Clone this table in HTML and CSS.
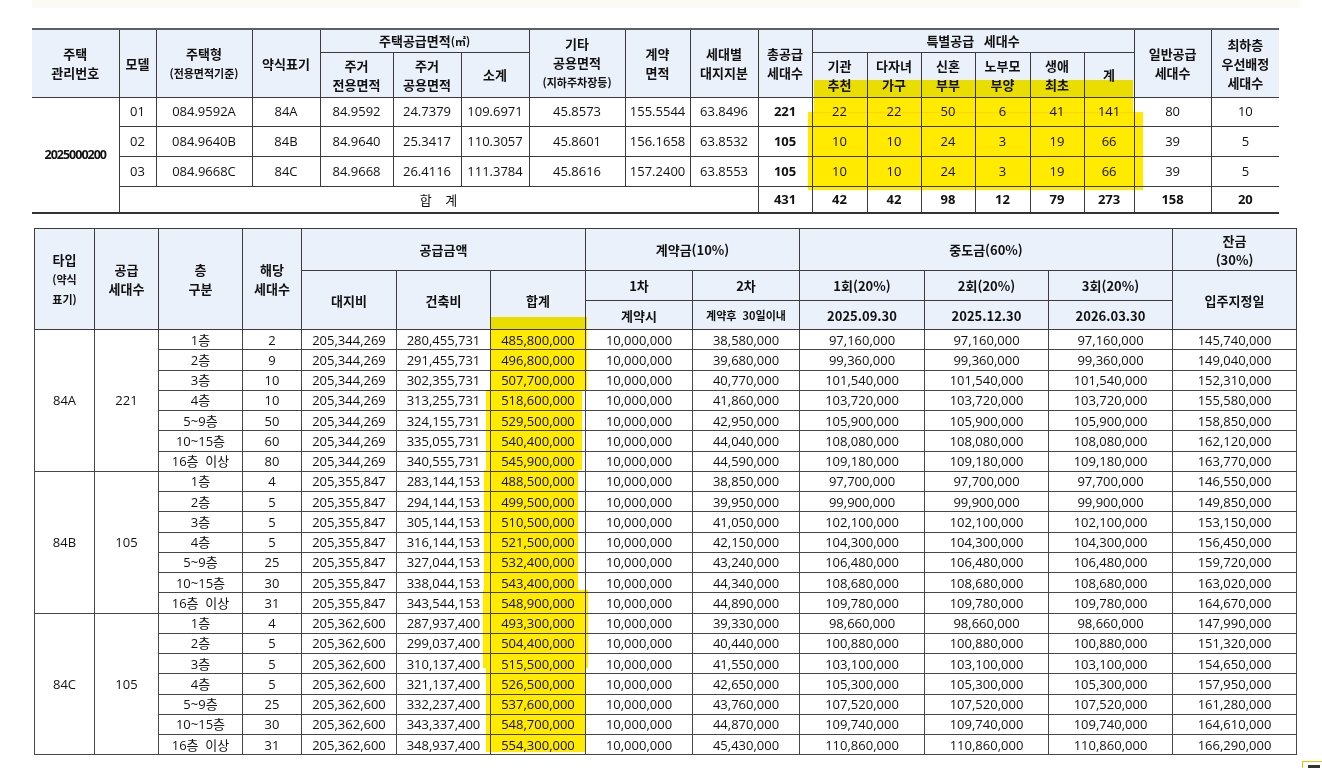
FILE: index.html
```html
<!DOCTYPE html>
<html lang="ko">
<head>
<meta charset="utf-8">
<title>공급금액</title>
<link rel="stylesheet" href="styles.css">
</head>
<body>
<div class="page">
  <div class="strip"></div>

  <table class="t1">
    <colgroup>
      <col class="a1"><col class="a2"><col class="a3"><col class="a4"><col class="a5"><col class="a6"><col class="a7"><col class="a8"><col class="a9"><col class="a10"><col class="a11"><col class="a12"><col class="a13"><col class="a14"><col class="a15"><col class="a16"><col class="a17"><col class="a18"><col class="a19">
    </colgroup>
    <tr class="h1">
      <th rowspan="2" class="nol">주택<br>관리번호</th>
      <th rowspan="2">모델</th>
      <th rowspan="2">주택형<br><span class="sm">(전용면적기준)</span></th>
      <th rowspan="2">약식표기</th>
      <th colspan="3">주택공급면적<span class="sm">(㎡)</span></th>
      <th rowspan="2">기타<br>공용면적<br><span class="sm">(지하주차장등)</span></th>
      <th rowspan="2">계약<br>면적</th>
      <th rowspan="2">세대별<br>대지지분</th>
      <th rowspan="2">총공급<br>세대수</th>
      <th colspan="6" class="wide">특별공급 세대수</th>
      <th rowspan="2">일반공급<br>세대수</th>
      <th rowspan="2" class="nor">최하층<br>우선배정<br>세대수</th>
    </tr>
    <tr class="h2">
      <th>주거<br>전용면적</th>
      <th>주거<br>공용면적</th>
      <th>소계</th>
      <th>기관<br>추천</th>
      <th>다자녀<br>가구</th>
      <th>신혼<br>부부</th>
      <th>노부모<br>부양</th>
      <th>생애<br>최초</th>
      <th>계</th>
    </tr>
    <tr class="r1 first">
      <td rowspan="4" class="nol id">2025000200</td>
      <td>01</td><td>084.9592A</td><td>84A</td><td>84.9592</td><td>24.7379</td><td>109.6971</td><td>45.8573</td><td>155.5544</td><td>63.8496</td>
      <td class="b">221</td><td>22</td><td>22</td><td>50</td><td>6</td><td>41</td><td>141</td><td>80</td><td class="nor">10</td>
    </tr>
    <tr class="r2">
      <td>02</td><td>084.9640B</td><td>84B</td><td>84.9640</td><td>25.3417</td><td>110.3057</td><td>45.8601</td><td>156.1658</td><td>63.8532</td>
      <td class="b">105</td><td>10</td><td>10</td><td>24</td><td>3</td><td>19</td><td>66</td><td>39</td><td class="nor">5</td>
    </tr>
    <tr class="r2">
      <td>03</td><td>084.9668C</td><td>84C</td><td>84.9668</td><td>26.4116</td><td>111.3784</td><td>45.8616</td><td>157.2400</td><td>63.8553</td>
      <td class="b">105</td><td>10</td><td>10</td><td>24</td><td>3</td><td>19</td><td>66</td><td>39</td><td class="nor">5</td>
    </tr>
    <tr class="rt">
      <td colspan="9" class="sum">합 계</td>
      <td class="b">431</td><td class="b">42</td><td class="b">42</td><td class="b">98</td><td class="b">12</td><td class="b">79</td><td class="b">273</td><td class="b">158</td><td class="b nor">20</td>
    </tr>
  </table>

  <table class="t2">
    <colgroup>
      <col class="b1"><col class="b2"><col class="b3"><col class="b4"><col class="b5"><col class="b6"><col class="b7"><col class="b8"><col class="b9"><col class="b10"><col class="b11"><col class="b12"><col class="b13">
    </colgroup>
    <tr class="g1">
      <th rowspan="3">타입<br><span class="sm">(약식<br>표기)</span></th>
      <th rowspan="3">공급<br>세대수</th>
      <th rowspan="3">층<br>구분</th>
      <th rowspan="3">해당<br>세대수</th>
      <th colspan="3">공급금액</th>
      <th colspan="2">계약금(10%)</th>
      <th colspan="3">중도금(60%)</th>
      <th>잔금<br>(30%)</th>
    </tr>
    <tr class="g2">
      <th rowspan="2">대지비</th>
      <th rowspan="2">건축비</th>
      <th rowspan="2">합계</th>
      <th>1차</th>
      <th>2차</th>
      <th>1회(20%)</th>
      <th>2회(20%)</th>
      <th>3회(20%)</th>
      <th rowspan="2">입주지정일</th>
    </tr>
    <tr class="g3">
      <th>계약시</th>
      <th><span class="xs">계약후&nbsp;&nbsp;30일이내</span></th>
      <th>2025.09.30</th>
      <th>2025.12.30</th>
      <th>2026.03.30</th>
    </tr>

    <tr class="d grp"><td rowspan="7">84A</td><td rowspan="7">221</td><td>1층</td><td>2</td><td>205,344,269</td><td>280,455,731</td><td>485,800,000</td><td>10,000,000</td><td>38,580,000</td><td>97,160,000</td><td>97,160,000</td><td>97,160,000</td><td>145,740,000</td></tr>
    <tr class="d"><td>2층</td><td>9</td><td>205,344,269</td><td>291,455,731</td><td>496,800,000</td><td>10,000,000</td><td>39,680,000</td><td>99,360,000</td><td>99,360,000</td><td>99,360,000</td><td>149,040,000</td></tr>
    <tr class="d"><td>3층</td><td>10</td><td>205,344,269</td><td>302,355,731</td><td>507,700,000</td><td>10,000,000</td><td>40,770,000</td><td>101,540,000</td><td>101,540,000</td><td>101,540,000</td><td>152,310,000</td></tr>
    <tr class="d"><td>4층</td><td>10</td><td>205,344,269</td><td>313,255,731</td><td>518,600,000</td><td>10,000,000</td><td>41,860,000</td><td>103,720,000</td><td>103,720,000</td><td>103,720,000</td><td>155,580,000</td></tr>
    <tr class="d"><td>5~9층</td><td>50</td><td>205,344,269</td><td>324,155,731</td><td>529,500,000</td><td>10,000,000</td><td>42,950,000</td><td>105,900,000</td><td>105,900,000</td><td>105,900,000</td><td>158,850,000</td></tr>
    <tr class="d"><td>10~15층</td><td>60</td><td>205,344,269</td><td>335,055,731</td><td>540,400,000</td><td>10,000,000</td><td>44,040,000</td><td>108,080,000</td><td>108,080,000</td><td>108,080,000</td><td>162,120,000</td></tr>
    <tr class="d"><td>16층&nbsp;&nbsp;이상</td><td>80</td><td>205,344,269</td><td>340,555,731</td><td>545,900,000</td><td>10,000,000</td><td>44,590,000</td><td>109,180,000</td><td>109,180,000</td><td>109,180,000</td><td>163,770,000</td></tr>

    <tr class="d grp"><td rowspan="7">84B</td><td rowspan="7">105</td><td>1층</td><td>4</td><td>205,355,847</td><td>283,144,153</td><td>488,500,000</td><td>10,000,000</td><td>38,850,000</td><td>97,700,000</td><td>97,700,000</td><td>97,700,000</td><td>146,550,000</td></tr>
    <tr class="d"><td>2층</td><td>5</td><td>205,355,847</td><td>294,144,153</td><td>499,500,000</td><td>10,000,000</td><td>39,950,000</td><td>99,900,000</td><td>99,900,000</td><td>99,900,000</td><td>149,850,000</td></tr>
    <tr class="d"><td>3층</td><td>5</td><td>205,355,847</td><td>305,144,153</td><td>510,500,000</td><td>10,000,000</td><td>41,050,000</td><td>102,100,000</td><td>102,100,000</td><td>102,100,000</td><td>153,150,000</td></tr>
    <tr class="d"><td>4층</td><td>5</td><td>205,355,847</td><td>316,144,153</td><td>521,500,000</td><td>10,000,000</td><td>42,150,000</td><td>104,300,000</td><td>104,300,000</td><td>104,300,000</td><td>156,450,000</td></tr>
    <tr class="d"><td>5~9층</td><td>25</td><td>205,355,847</td><td>327,044,153</td><td>532,400,000</td><td>10,000,000</td><td>43,240,000</td><td>106,480,000</td><td>106,480,000</td><td>106,480,000</td><td>159,720,000</td></tr>
    <tr class="d"><td>10~15층</td><td>30</td><td>205,355,847</td><td>338,044,153</td><td>543,400,000</td><td>10,000,000</td><td>44,340,000</td><td>108,680,000</td><td>108,680,000</td><td>108,680,000</td><td>163,020,000</td></tr>
    <tr class="d"><td>16층&nbsp;&nbsp;이상</td><td>31</td><td>205,355,847</td><td>343,544,153</td><td>548,900,000</td><td>10,000,000</td><td>44,890,000</td><td>109,780,000</td><td>109,780,000</td><td>109,780,000</td><td>164,670,000</td></tr>

    <tr class="d grp"><td rowspan="7">84C</td><td rowspan="7">105</td><td>1층</td><td>4</td><td>205,362,600</td><td>287,937,400</td><td>493,300,000</td><td>10,000,000</td><td>39,330,000</td><td>98,660,000</td><td>98,660,000</td><td>98,660,000</td><td>147,990,000</td></tr>
    <tr class="d"><td>2층</td><td>5</td><td>205,362,600</td><td>299,037,400</td><td>504,400,000</td><td>10,000,000</td><td>40,440,000</td><td>100,880,000</td><td>100,880,000</td><td>100,880,000</td><td>151,320,000</td></tr>
    <tr class="d"><td>3층</td><td>5</td><td>205,362,600</td><td>310,137,400</td><td>515,500,000</td><td>10,000,000</td><td>41,550,000</td><td>103,100,000</td><td>103,100,000</td><td>103,100,000</td><td>154,650,000</td></tr>
    <tr class="d"><td>4층</td><td>5</td><td>205,362,600</td><td>321,137,400</td><td>526,500,000</td><td>10,000,000</td><td>42,650,000</td><td>105,300,000</td><td>105,300,000</td><td>105,300,000</td><td>157,950,000</td></tr>
    <tr class="d"><td>5~9층</td><td>25</td><td>205,362,600</td><td>332,237,400</td><td>537,600,000</td><td>10,000,000</td><td>43,760,000</td><td>107,520,000</td><td>107,520,000</td><td>107,520,000</td><td>161,280,000</td></tr>
    <tr class="d"><td>10~15층</td><td>30</td><td>205,362,600</td><td>343,337,400</td><td>548,700,000</td><td>10,000,000</td><td>44,870,000</td><td>109,740,000</td><td>109,740,000</td><td>109,740,000</td><td>164,610,000</td></tr>
    <tr class="d"><td>16층&nbsp;&nbsp;이상</td><td>31</td><td>205,362,600</td><td>348,937,400</td><td>554,300,000</td><td>10,000,000</td><td>45,430,000</td><td>110,860,000</td><td>110,860,000</td><td>110,860,000</td><td>166,290,000</td></tr>
  </table>

  <!-- marker highlights drawn over the tables -->
  <div class="hl hl-a"></div>
  <div class="hl hl-b"></div>
  <div class="hl hl-c"></div>
  <div class="hl hl-d"></div>
  <div class="hl hl-e"></div>
  <div class="hl hl-f"></div>
  <div class="hl hl-g"></div>

  <div class="corner"><span></span></div>
</div>
</body>
</html>
```

FILE: styles.css
```css
* { box-sizing: border-box; }

body {
  margin: 0;
  background: #ffffff;
  font-family: "Open Sans", "Noto Sans CJK KR", sans-serif;
  color: #111111;
}

.page {
  position: relative;
  width: 1322px;
  height: 768px;
  overflow: hidden;
}

.strip {
  margin-left: 32px;
  width: 1268px;
  height: 8px;
  background: #fbfbf3;
}

table {
  border-collapse: collapse;
  table-layout: fixed;
}

th, td {
  padding: 0;
  text-align: center;
  vertical-align: middle;
  border: 1px solid #3c3c3c;
  font-size: 13px;
  line-height: 19px;
  white-space: nowrap;
  overflow: hidden;
}

th {
  background: #eaf1fa;
  font-family: "Noto Sans CJK KR", sans-serif;
  font-weight: 700;
  color: #111111;
}

.sm { font-size: 11px; }
.xs { font-size: 11px; }
.b { font-weight: 700; }
.wide { word-spacing: 6px; }

/* ---- top table ---- */
.t1 {
  margin: 20px 0 0 32px;
  width: 1247px;
}
.t1 .h1 th { border-top: 2px solid #5f5f5f; }
.t1 .h1 { height: 23px; }
.t1 .h2 { height: 45px; }
.t1 .r1 { height: 29px; }
.t1 .r2 { height: 30px; }
.t1 .rt { height: 27px; }
.t1 .rt td { border-bottom: 2px solid #333333; }
.t1 .first td { border-top: 1px solid #2a2a2a; }
.t1 .nol { border-left: 0; }
.t1 .nor { border-right: 0; }
.t1 .id {
  font-weight: 700;
  font-size: 12.5px;
  letter-spacing: -1px;
  border-bottom: 2px solid #333333;
}
.t1 .sum {
  font-family: "Noto Sans CJK KR", sans-serif;
  word-spacing: 10px;
}

.a1 { width: 87px; }
.a2 { width: 37px; }
.a3 { width: 96px; }
.a4 { width: 68px; }
.a5 { width: 73px; }
.a6 { width: 68px; }
.a7 { width: 68px; }
.a8 { width: 96px; }
.a9 { width: 65px; }
.a10 { width: 68px; }
.a11 { width: 54px; }
.a12 { width: 55px; }
.a13 { width: 54px; }
.a14 { width: 54px; }
.a15 { width: 55px; }
.a16 { width: 54px; }
.a17 { width: 50px; }
.a18 { width: 77px; }
.a19 { width: 68px; }

/* ---- bottom table ---- */
.t2 {
  margin: 14px 0 0 34px;
  width: 1262px;
  border: 1px solid #333333;
}
.t2 .g1 { height: 42px; }
.t2 .g2 { height: 30px; }
.t2 .g3 { height: 29px; }
.t2 .d { height: 20.25px; }
.t2 .d td { line-height: 18px; border-color: #474747; }
.t2 .grp td { border-top: 1px solid #2a2a2a; }

.b1 { width: 60px; }
.b2 { width: 64px; }
.b3 { width: 84px; }
.b4 { width: 59px; }
.b5 { width: 95px; }
.b6 { width: 94px; }
.b7 { width: 95px; }
.b8 { width: 107px; }
.b9 { width: 107px; }
.b10 { width: 125px; }
.b11 { width: 124px; }
.b12 { width: 124px; }
.b13 { width: 124px; }

/* ---- marker highlights (overlay) ---- */
.hl {
  position: absolute;
  background: #ffea00;
  mix-blend-mode: multiply;
  pointer-events: none;
}
.hl-a { left: 814px; top: 80px; width: 319px; height: 33px; }
.hl-b { left: 808px; top: 112px; width: 335px; height: 78px; }
.hl-c { left: 491px; top: 317px; width: 96px; height: 73px; }
.hl-d { left: 486px; top: 390px; width: 96px; height: 80px; }
.hl-e { left: 484px; top: 470px; width: 94px; height: 120px; }
.hl-f { left: 483px; top: 590px; width: 105px; height: 78px; }
.hl-g { left: 486px; top: 668px; width: 99px; height: 84px; }

.corner {
  position: absolute;
  left: 1302px;
  top: 761px;
  width: 24px;
  height: 10px;
  border-top: 1px solid #e6c600;
  border-left: 1px solid #e6c600;
}
.corner span {
  position: absolute;
  left: 5px;
  top: 3px;
  width: 12px;
  height: 6px;
  background: #333333;
}
```
